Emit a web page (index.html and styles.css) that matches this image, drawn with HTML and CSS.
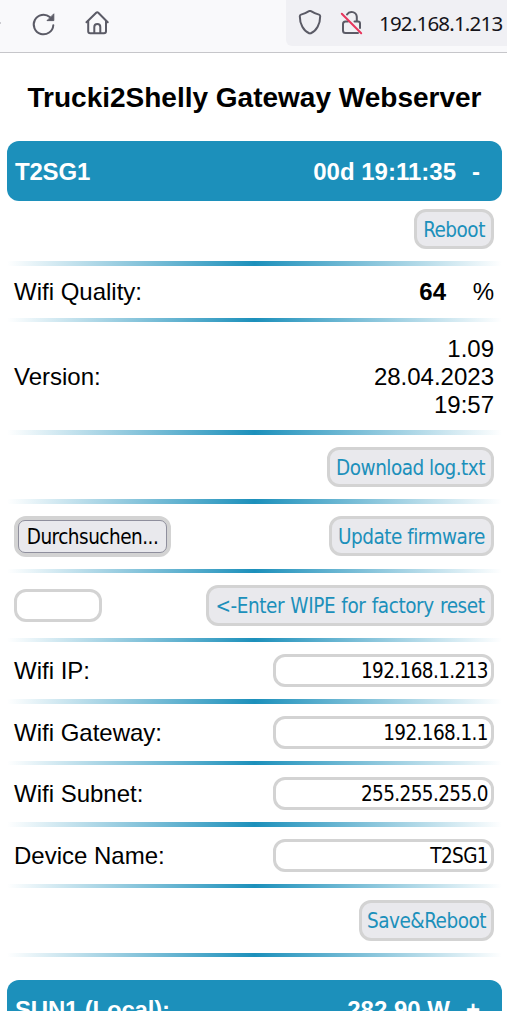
FILE: index.html
```html
<!DOCTYPE html>
<html lang="en">
<head>
<meta charset="utf-8">
<title>Trucki2Shelly Gateway Webserver</title>
<link rel="stylesheet" href="styles.css">
</head>
<body>
<div class="browser-bar">
  <span class="back-edge"></span>
  <svg class="icon reload" width="26" height="26" viewBox="0 0 26 26" fill="none" stroke="#5b5b66" stroke-width="2" stroke-linecap="round">
    <path d="M22.3 14.2A9.8 9.8 0 1 1 18.8 6"/>
    <path d="M22.8 3.2V9.6H16.4Z" fill="#5b5b66" stroke-width="1" stroke-linejoin="round"/>
  </svg>
  <svg class="icon home" width="26" height="26" viewBox="0 0 26 26" fill="none" stroke="#5b5b66" stroke-width="2" stroke-linecap="round" stroke-linejoin="round">
    <path d="M2.5 11.3 12.2 1.700a1.5 1.5 0 0 1 2.1 0L23.7 11.3"/>
    <path d="M4.2 10V20.200a2 2 0 0 0 2 2H20a2 2 0 0 0 2-2V10"/>
    <path d="M10.3 22V16a3 3 0 0 1 6 0V22"/>
  </svg>
  <div class="url">
    <svg class="shield" width="24" height="26" viewBox="0 0 24 26" fill="none" stroke="#5b5b66" stroke-width="2" stroke-linejoin="round">
      <path d="M11 1.2a2 2 0 0 1 2 0C15.500 2.800 18.500 4 21 4.600Q22.200 5 22.200 6.200C22.200 14 18.500 21 12.900 23.200a2 2 0 0 1-1.800 0C5.500 21 1.800 14 1.800 6.200Q1.800 5 3 4.600C5.500 4 8.500 2.800 11 1.200Z"/>
    </svg>
    <svg class="lock" width="24" height="28" viewBox="0 0 24 28" fill="none" stroke="#5b5b66" stroke-width="2" stroke-linecap="round">
      <path d="M7 5.500a5.300 5.300 0 0 1 9.800 2.400V12"/>
      <path d="M14.500 12.500H18a2 2 0 0 1 2 2V19"/>
      <path d="M8 12.500H5.500a2.500 2.500 0 0 0-2.500 2.500V21.500a2.500 2.500 0 0 0 2.500 2.500H18"/>
      <path d="M1.800 4.700 21.200 24.200" stroke="#e8365d"/>
    </svg>
    <span class="address">192.168.1.213</span>
  </div>
</div>
<main class="page">
  <h1 class="title">Trucki2Shelly Gateway Webserver</h1>
  <div class="section-head"><span class="name">T2SG1</span><span class="status">00d 19:11:35</span><span class="toggle">-</span></div>

  <div class="row row-first"><button class="btn reboot">Reboot</button></div>
  <hr class="rule tall">
  <div class="row quality"><span class="label">Wifi Quality:</span><span class="value"><b>64</b></span><span class="unit">%</span></div>
  <hr class="rule">
  <div class="row version"><span class="label">Version:</span><span class="value">1.09<br>28.04.2023<br>19:57</span></div>
  <hr class="rule tall">
  <div class="row log"><button class="btn download">Download log.txt</button></div>
  <hr class="rule tall">
  <div class="row actions"><div class="file-frame"><button class="file">Durchsuchen...</button></div><button class="btn update">Update firmware</button></div>
  <hr class="rule">
  <div class="row actions"><input class="field wipe-code" aria-label="Wipe code"><button class="btn wipe">&lt;-Enter WIPE for factory reset</button></div>
  <hr class="rule">
  <div class="row entry"><span class="label">Wifi IP:</span><input class="field" value="192.168.1.213" aria-label="Wifi IP"></div>
  <hr class="rule tall">
  <div class="row entry"><span class="label">Wifi Gateway:</span><input class="field" value="192.168.1.1" aria-label="Wifi Gateway"></div>
  <hr class="rule">
  <div class="row entry"><span class="label">Wifi Subnet:</span><input class="field" value="255.255.255.0" aria-label="Wifi Subnet"></div>
  <hr class="rule tall">
  <div class="row entry"><span class="label">Device Name:</span><input class="field" value="T2SG1" aria-label="Device Name"></div>
  <hr class="rule">
  <div class="row actions"><button class="btn save">Save&amp;Reboot</button></div>
  <hr class="rule">
  <div class="section-head next"><span class="name">SUN1 (Local):</span><span class="status">282.90 W</span><span class="toggle">+</span></div>
</main>
</body>
</html>
```
FILE: styles.css
```css
* { box-sizing: border-box; }
html, body { margin: 0; height: 1014px; overflow: hidden; }
body { background: #fff; color: #000; font: 24px/28px "Liberation Sans", Arial, sans-serif; }

.browser-bar { display: flex; align-items: flex-start; height: 53px; background: #f9f9fb; border-bottom: 1px solid #c6c6ca; }
.back-edge { width: 1px; height: 2px; margin-top: 22px; background: #ccccd1; }
.icon { flex: none; margin-top: 11px; }
.reload { margin-left: 30px; }
.home { margin-left: 27px; }
.url { display: flex; width: 221px; height: 46px; margin-left: auto; padding-left: 12px; background: #f0f0f4; border-bottom-left-radius: 6px; }
.shield { flex: none; margin-top: 10px; }
.lock { flex: none; margin: 9px 0 0 18px; }
.address { margin: 9px 0 0 15px; color: #15141a; font: 20.500px/28px "Noto Sans", sans-serif; letter-spacing: -0.8px; white-space: nowrap; }

.page { height: 958px; padding: 0 5px 0 7px; overflow: hidden; }
.title { height: 88px; margin: 0; padding-top: 27px; font-size: 28px; line-height: 36px; text-align: center; white-space: nowrap; }
.section-head { display: flex; align-items: center; height: 60px; padding: 2px 22px 0 8px; border-radius: 12px; background: #1c90bb; color: #fff; font-weight: bold; }
.name { letter-spacing: -0.2px; }
.status { margin-left: auto; }
.toggle { margin-left: 16px; }
.next { margin-top: 23px; padding-top: 0; }

.row { display: flex; justify-content: space-between; align-items: center; padding: 0 8px 0 7px; }
.row-first { height: 60px; align-items: flex-start; padding-top: 8px; }
.quality { height: 52px; }
.value { text-align: right; }
.quality .value { margin-left: auto; }
.unit { width: 48px; text-align: right; }
.version { height: 108px; padding-top: 2px; }
.log { height: 64px; }
.actions { height: 65px; }
.entry { height: 57px; }
.rule { height: 4px; margin: 0; border: 0; background: linear-gradient(to right, transparent, #1c90bb 50%, transparent); }
.rule.tall { height: 5px; }

.btn, .field, .file { font: 20.5px/26px "DejaVu Sans Condensed", "DejaVu Sans", sans-serif; font-stretch: condensed; white-space: nowrap; }
.btn { height: 40px; margin-left: auto; padding: 2px 0 0; border: 3px solid #d3d3d3; border-radius: 12px; background: #e9e9ed; color: #1c90bb; text-align: center; letter-spacing: -0.5px; }
.reboot { width: 80px; }
.download { width: 167px; }
.update { width: 165px; margin-bottom: 1px; }
.wipe { width: 288px; height: 41px; letter-spacing: -0.4px; word-spacing: 0.7px; padding: 0; }
.save { width: 135px; height: 41px; padding-top: 1px; }
.field { width: 221px; height: 33px; padding: 1px 3px 0; border: 3px solid #d3d3d3; border-radius: 12px; background: #fff; color: #000; text-align: right; letter-spacing: -0.6px; }
.wipe-code { width: 88px; }
.file-frame { width: 157px; height: 41px; padding: 1px; border: 3px solid #d3d3d3; border-radius: 12px; background: #d3d3d3; }
.file { width: 100%; height: 100%; padding: 0; border: 1px solid #8f8f9d; border-radius: 7px; background: #e9e9ed; color: #000; letter-spacing: -0.5px; }
```
